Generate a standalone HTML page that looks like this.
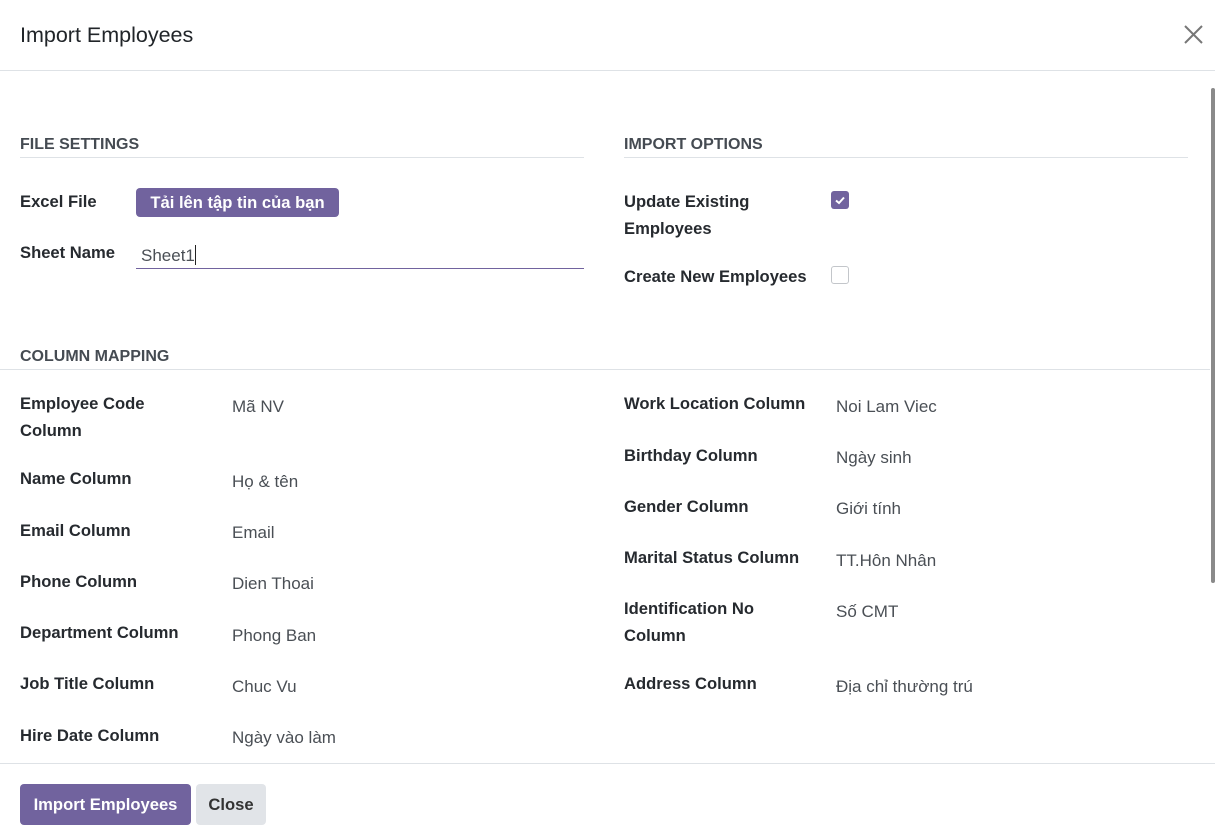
<!DOCTYPE html>
<html><head><meta charset="utf-8"><style>
*{margin:0;padding:0;box-sizing:border-box}
body{width:1215px;height:839px;background:#fff;font-family:"Liberation Sans","Noto Sans CJK SC",sans-serif;color:#212529;position:relative;overflow:hidden}
.a{position:absolute;white-space:nowrap}
.l{font-size:16.6px;font-weight:bold;color:#262a2f;line-height:27px}
.v{font-size:17px;color:#4a4f55;line-height:27px}
.h{font-size:16px;font-weight:bold;color:#454b52}
.line{position:absolute;height:1px;background:#dee2e6}
.btn{position:absolute;border-radius:4px;font-size:16.6px;font-weight:bold;text-align:center}
</style></head><body>
<div class="a" style="left:20px;top:23px;font-size:21.5px;color:#212529">Import Employees</div>
<svg class="a" style="left:1184px;top:25px" width="19" height="19" viewBox="0 0 19 19"><path d="M1 1L18 18M18 1L1 18" stroke="#777" stroke-width="2"/></svg>
<div class="line" style="left:0;top:70px;width:1215px"></div>
<div class="a" style="left:1211px;top:88px;width:4px;height:495px;background:#8a8a8a;border-radius:2px"></div>

<div class="a h" style="left:20px;top:136px">FILE SETTINGS</div>
<div class="line" style="left:20px;top:157px;width:564px"></div>
<div class="a h" style="left:624px;top:136px">IMPORT OPTIONS</div>
<div class="line" style="left:624px;top:157px;width:564px"></div>

<div class="a l" style="left:20px;top:188px">Excel File</div>
<div class="btn" style="left:136px;top:188px;width:203px;height:29px;background:#71639e;color:#fff;line-height:29px;font-size:16.6px">Tải lên tập tin của bạn</div>
<div class="a l" style="left:20px;top:239px">Sheet Name</div>
<div class="a v" style="left:141px;top:242px">Sheet1<span style="display:inline-block;width:1px;height:20px;background:#222;vertical-align:-4px"></span></div>
<div class="a" style="left:136px;top:268px;width:448px;height:1px;background:#71639e"></div>

<div class="a l" style="left:624px;top:188px">Update Existing<br>Employees</div>
<div class="a" style="left:831px;top:191px;width:18px;height:18px;border-radius:3px;background:#71639e"></div>
<svg class="a" style="left:831px;top:191px" width="18" height="18"><path d="M5 9.5L8 12L13 6.5" stroke="#fff" stroke-width="2" fill="none"/></svg>
<div class="a l" style="left:624px;top:263px">Create New Employees</div>
<div class="a" style="left:831px;top:266px;width:18px;height:18px;border-radius:3px;border:1px solid #c3c6ca"></div>

<div class="a h" style="left:20px;top:348px">COLUMN MAPPING</div>
<div class="line" style="left:0;top:369px;width:1210px"></div>

<div class="a l" style="left:20px;top:390px">Employee Code<br>Column</div><div class="a v" style="left:232px;top:393px">Mã NV</div>
<div class="a l" style="left:20px;top:465px">Name Column</div><div class="a v" style="left:232px;top:468px">Họ &amp; tên</div>
<div class="a l" style="left:20px;top:517px">Email Column</div><div class="a v" style="left:232px;top:519px">Email</div>
<div class="a l" style="left:20px;top:568px">Phone Column</div><div class="a v" style="left:232px;top:570px">Dien Thoai</div>
<div class="a l" style="left:20px;top:619px">Department Column</div><div class="a v" style="left:232px;top:622px">Phong Ban</div>
<div class="a l" style="left:20px;top:670px">Job Title Column</div><div class="a v" style="left:232px;top:673px">Chuc Vu</div>
<div class="a l" style="left:20px;top:722px">Hire Date Column</div><div class="a v" style="left:232px;top:724px">Ngày vào làm</div>

<div class="a l" style="left:624px;top:390px">Work Location Column</div><div class="a v" style="left:836px;top:393px">Noi Lam Viec</div>
<div class="a l" style="left:624px;top:442px">Birthday Column</div><div class="a v" style="left:836px;top:444px">Ngày sinh</div>
<div class="a l" style="left:624px;top:493px">Gender Column</div><div class="a v" style="left:836px;top:495px">Giới tính</div>
<div class="a l" style="left:624px;top:544px">Marital Status Column</div><div class="a v" style="left:836px;top:547px">TT.Hôn Nhân</div>
<div class="a l" style="left:624px;top:595px">Identification No<br>Column</div><div class="a v" style="left:836px;top:598px">Số CMT</div>
<div class="a l" style="left:624px;top:670px">Address Column</div><div class="a v" style="left:836px;top:673px">Địa chỉ thường trú</div>

<div class="line" style="left:0;top:763px;width:1215px"></div>
<div class="btn" style="left:20px;top:784px;width:171px;height:41px;line-height:42px;background:#71639e;color:#fff">Import Employees</div>
<div class="btn" style="left:196px;top:784px;width:70px;height:41px;line-height:42px;background:#e1e4e8;color:#333">Close</div>
</body></html>
